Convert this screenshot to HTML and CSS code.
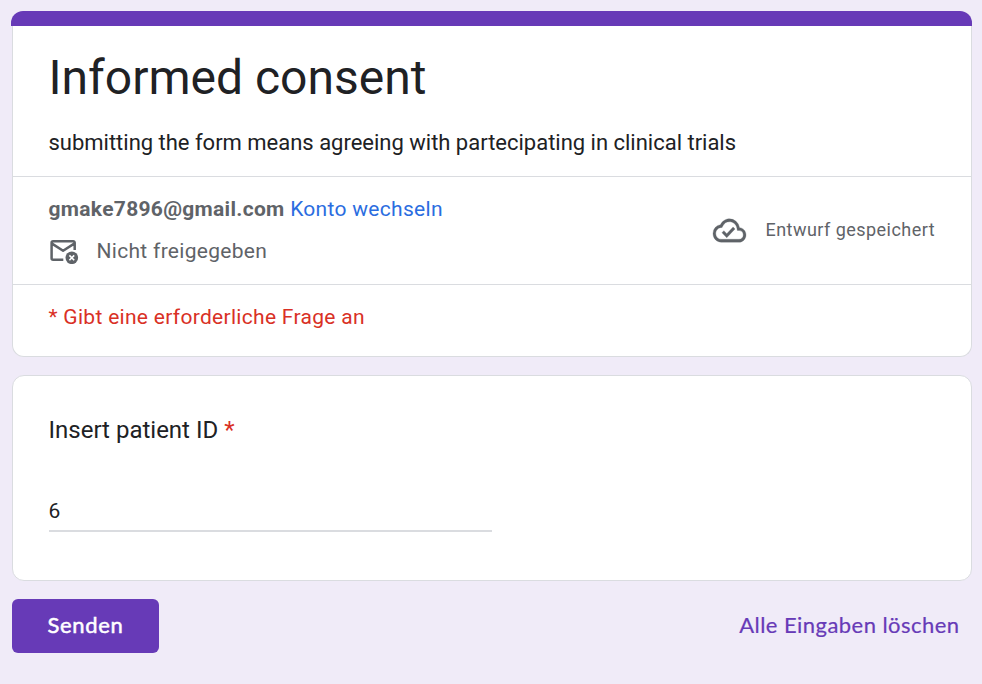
FILE: index.html
```html
<!DOCTYPE html>
<html lang="de">
<head>
<meta charset="utf-8">
<title>Informed consent</title>
<link rel="stylesheet" href="styles.css">
</head>
<body>
<main class="page">
  <section class="card header">
    <div class="accent"></div>
    <div class="intro">
      <h1>Informed consent</h1>
      <p class="description">submitting the form means agreeing with partecipating in clinical trials</p>
    </div>
    <div class="account">
      <div class="identity">
        <div class="account-line"><strong class="email">gmake7896@gmail.com</strong> <a class="switch">Konto wechseln</a></div>
        <div class="shared">
          <svg class="mail" viewBox="0 0 30 26" aria-hidden="true">
            <path d="M25.700 12V4.800a1.500 1.500 0 0 0-1.500-1.500H4.100A1.500 1.500 0 0 0 2.600 4.800v15.500a1.500 1.500 0 0 0 1.500 1.500H14.300M3 5.600l11.100 7.200L25.200 5.600" fill="none" stroke="#5f6368" stroke-width="2.500" stroke-linejoin="round"/>
            <circle cx="22.800" cy="19.800" r="6.300" fill="#5f6368"/>
            <path d="M20.400 17.400l4.800 4.800m0-4.800l-4.800 4.800" stroke="#fff" stroke-width="1.600"/>
          </svg>
          <span class="shared-text">Nicht freigegeben</span>
        </div>
      </div>
      <div class="draft">
        <svg class="cloud" viewBox="0 0 24 24" preserveAspectRatio="none" aria-hidden="true"><path fill="#5f6368" stroke="#5f6368" stroke-width=".2" d="M19.35 10.04A7.49 7.49 0 0 0 12 4C9.11 4 6.6 5.64 5.35 8.04A5.994 5.994 0 0 0 0 14c0 3.31 2.69 6 6 6h13c2.76 0 5-2.24 5-5 0-2.64-2.05-4.78-4.65-4.96zM19 18H6c-2.21 0-4-1.79-4-4 0-2.05 1.53-3.76 3.56-3.97l1.07-.11.5-.95A5.469 5.469 0 0 1 12 6c2.62 0 4.88 1.86 5.39 4.43l.3 1.5 1.53.11A2.98 2.98 0 0 1 22 15c0 1.65-1.35 3-3 3zm-9-3.82l-2.09-2.09L6.5 13.5 10 17l6.01-6.01-1.41-1.41z"/></svg>
        <span class="draft-text">Entwurf gespeichert</span>
      </div>
    </div>
    <div class="required"><span class="required-text">* Gibt eine erforderliche Frage an</span></div>
  </section>
  <section class="card question">
    <label class="label" for="patient"><span class="label-text">Insert patient ID</span> <span class="star">*</span></label>
    <input id="patient" class="answer" type="text" value="6">
  </section>
  <footer class="actions">
    <button class="submit"><span class="submit-text">Senden</span></button>
    <a class="clear">Alle Eingaben löschen</a>
  </footer>
</main>
</body>
</html>
```
FILE: styles.css
```css
* { box-sizing: border-box; }
body {
  margin: 0;
  background: #f0ebf8;
  color: #202124;
  font-family: Roboto, "Liberation Sans", sans-serif;
}
.page { padding: 11px 10px 0 12px; }
.card {
  background: #fff;
  border: 1px solid #dadce0;
  border-radius: 12px;
}
.header { height: 346px; border-top: 0; }
.accent {
  height: 15px;
  margin: 0 -1px 0 -2px;
  background: #673ab7;
  border-radius: 12px 12px 0 0;
}
.intro { height: 151px; padding: 22px 35.5px 0; border-bottom: 1px solid #dadce0; }
h1 { margin: 0; font-size: 48px; font-weight: 400; line-height: 60px; white-space: nowrap; }
.description { margin: 20px 0 0; font-size: 22px; line-height: 30px; letter-spacing: -.01px; white-space: nowrap; }
.account {
  height: 108px;
  padding: 16px 36px 0 35.5px;
  border-bottom: 1px solid #dadce0;
  display: flex;
  justify-content: space-between;
  color: #5f6368;
  font-size: 21px;
  line-height: 32px;
  letter-spacing: .3px;
  white-space: nowrap;
}
.switch { color: #2b6de0; }
.shared { display: flex; align-items: center; gap: 18px; margin-top: 10px; }
.mail { width: 30px; height: 26px; }
.draft { display: flex; align-items: center; gap: 19.5px; height: 74px; font-size: 18px; letter-spacing: .46px; }
.cloud { width: 33px; height: 35px; overflow: visible; }
.required { padding: 16px 35.5px; color: #d93025; font-size: 21px; line-height: 32px; letter-spacing: .3px; }
.question { height: 206px; margin-top: 18px; padding: 38px 36px 0; }
.label { display: block; margin-left: -.5px; font-size: 24px; line-height: 32px; }
.star { color: #d93025; }
.answer {
  display: block;
  width: 443px;
  height: 40px;
  margin-top: 46px;
  padding: 0;
  border: 0;
  border-bottom: 2px solid #dadce0;
  color: #202124;
  font: 21px Roboto, sans-serif;
  text-indent: -.5px;
  outline: 0;
}
.actions { display: flex; justify-content: space-between; align-items: center; margin-top: 18px; padding-right: 12.5px; }
.submit {
  width: 147px;
  height: 54px;
  padding: 0 0 3px;
  border: 0;
  border-radius: 6px;
  background: #673ab7;
  color: #fff;
  font: 22px Lato, sans-serif;
  letter-spacing: .65px;
  -webkit-text-stroke: .5px #fff;
}
.clear {
  padding-bottom: 3px;
  color: #673ab7;
  font: 22px Lato, sans-serif;
  letter-spacing: .45px;
  -webkit-text-stroke: .2px #673ab7;
}
```
